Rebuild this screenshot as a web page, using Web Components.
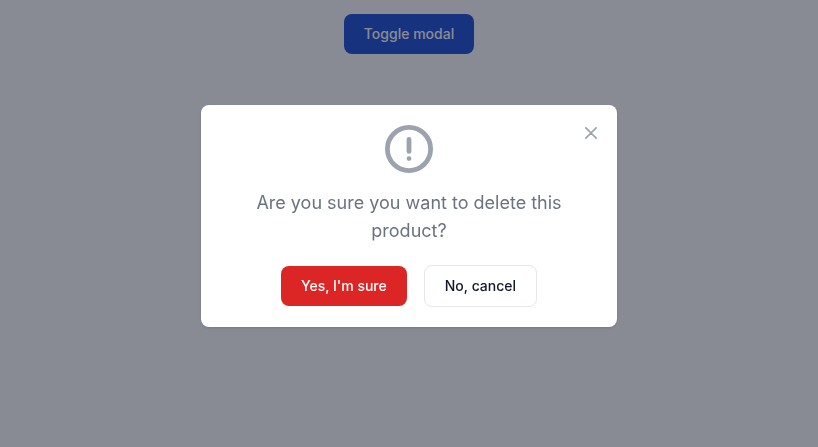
<!DOCTYPE html>
<html lang="en">
<head>
<meta charset="utf-8">
<title>Modal</title>
<style>
html,body{margin:0;height:100%;overflow:hidden;font-family:Inter,"Liberation Sans",sans-serif;background:#fff}
</style>
</head>
<body>
<demo-page></demo-page>
<script>
const define = (name, html) => customElements.define(name, class extends HTMLElement {
  constructor() {
    super();
    const t = document.createElement('template');
    t.innerHTML = html;
    this.attachShadow({ mode: 'open' }).append(t.content.cloneNode(true));
  }
});

define('ui-button', `
<style>
:host{display:block}
*{box-sizing:border-box}
button{display:block;font:500 14px/20px Inter,"Liberation Sans",sans-serif;color:#fff;background:#1d4ed8;border:0;border-radius:8px;padding:10px 20px;white-space:nowrap}
:host([kind=danger]) button{background:#dc2626}
:host([kind=light]) button{background:#fff;color:#111827;border:1px solid #e5e7eb}
</style>
<button type="button"><slot></slot></button>`);

define('ui-modal', `
<style>
:host{display:block;position:relative;box-sizing:border-box;width:416px;height:222px;padding:20px;background:#fff;border-radius:8px;box-shadow:0 1px 3px rgba(0,0,0,.1),0 1px 2px -1px rgba(0,0,0,.1);text-align:center}
.close{position:absolute;top:12px;right:10px;width:32px;height:32px;display:flex;align-items:center;justify-content:center;border:0;padding:0;background:transparent;color:#9ca3af}
.close svg{width:12px;height:12px}
.icon{display:block;width:48px;height:48px;margin:0 auto 16px;color:#9ca3af}
h3{margin:0 0 20px;font-weight:400;font-size:18px;line-height:28px;color:#6b7280}
.actions{display:flex;justify-content:center;align-items:center;gap:17px}
</style>
<button class="close" type="button" aria-label="Close modal"><svg fill="none" viewBox="0 0 14 14"><path stroke="currentColor" stroke-linecap="round" stroke-linejoin="round" stroke-width="2" d="m1 1 6 6m0 0 6 6M7 7l6-6M7 7l-6 6"/></svg></button>
<svg class="icon" fill="none" viewBox="0 0 20 20"><path stroke="currentColor" stroke-linecap="round" stroke-linejoin="round" stroke-width="2" d="M10 11V6m0 8h.01M19 10a9 9 0 1 1-18 0 9 9 0 0 1 18 0Z"/></svg>
<h3><slot></slot></h3>
<div class="actions"><slot name="actions"></slot></div>`);

define('demo-page', `
<style>
:host{display:block;height:100%}
main{display:flex;justify-content:center;padding-top:14px}
.overlay{position:fixed;inset:0;background:rgba(17,24,39,.5);display:flex;align-items:flex-start;justify-content:center;padding-top:105px}
</style>
<main><ui-button>Toggle modal</ui-button></main>
<div class="overlay"><ui-modal>Are you sure you want to delete this product?
<ui-button slot="actions" kind="danger">Yes, I'm sure</ui-button><ui-button slot="actions" kind="light">No, cancel</ui-button></ui-modal></div>`);
</script>
</body>
</html>
